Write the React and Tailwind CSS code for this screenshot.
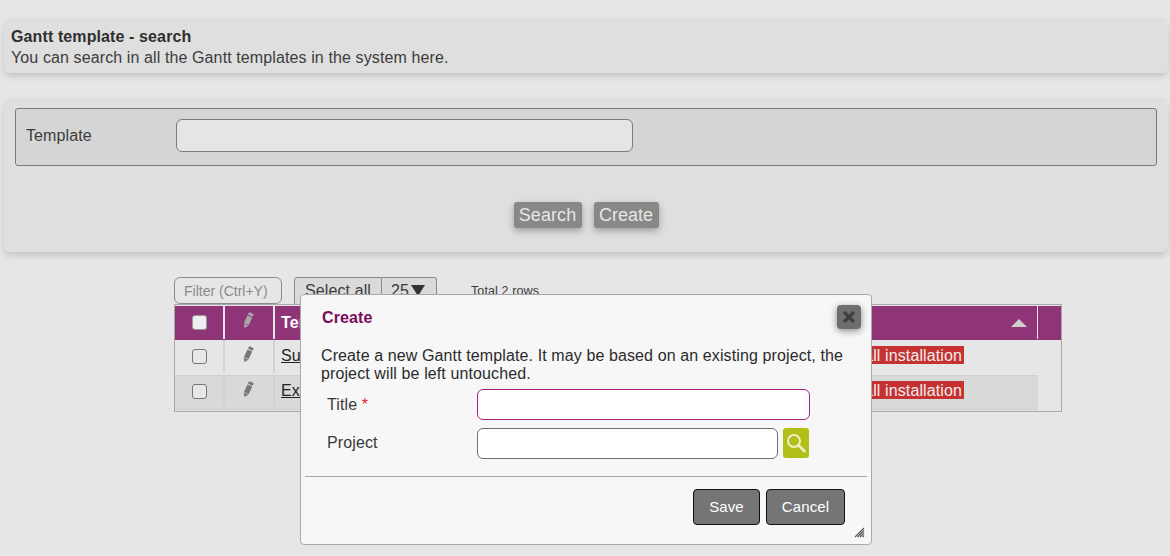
import React from 'react';

const Pencil = ({ className }) => (
  <svg className={className} width="12" height="17" viewBox="0 0 12 17">
    <g transform="rotate(25 6 8.5)" fill="currentColor">
      <rect x="3.4" y="0.3" width="5.2" height="3" rx="1" />
      <rect x="3.4" y="4.1" width="5.2" height="8.4" />
      <path d="M3.4 13 L8.6 13 L6 16.8 Z" />
    </g>
  </svg>
);

const Row = ({ name, alt }) => (
  <div className={`flex h-[35px] w-[863px] pb-[2px] ${alt ? 'bg-[#d9d9d9] border-t border-b border-t-[#d0d0d0] border-b-[#cfcfcf]' : ''}`}>
    <div className="w-[50px] flex items-center justify-center border-r-2 border-[#d2d2d2]">
      <div className="w-[15px] h-[15px] rounded-[3px] border border-[#777] bg-[#e8e8e8]" />
    </div>
    <div className="w-[50px] flex items-center justify-center border-r-2 border-[#d2d2d2] text-[#777] pb-1 pr-[2px]">
      <Pencil />
    </div>
    <div className="flex-1 flex items-center justify-between pl-[6px]">
      <a className="underline text-[16px] text-[#222] mb-[1px]">{name}</a>
      <span className={`self-start mr-[74px] bg-[#c63232] text-[#eee] text-[16px] leading-[17px] pt-[1px] px-[2px] tracking-[0.11px] ${alt ? 'mt-[5px]' : 'mt-[6px]'}`}>Small installation</span>
    </div>
  </div>
);

export default function App() {
  return (
    <div className="relative h-[556px] w-[1170px] overflow-hidden bg-[#e6e6e6] text-[#333] tracking-[0.11px] font-['Liberation_Sans',Arial,sans-serif]">
      <div className="pl-[4px] pt-[18px] pr-[2px]">
        <div className="h-[55px] rounded-[6px] bg-[#dfdfdf] shadow-[0_4px_7px_-1px_rgba(0,0,0,0.16)] px-[7px] pt-[8px] text-[16px] leading-[21px]">
          <div className="font-bold text-[#2f2f2f]">Gantt template - search</div>
          <div className="text-[#3c3c3c]">You can search in all the Gantt templates in the system here.</div>
        </div>

        <div className="mt-[25px] h-[154px] rounded-[6px] bg-[#dfdfdf] shadow-[0_4px_7px_-1px_rgba(0,0,0,0.16)] px-[11px] pt-[10px]">
          <div className="h-[58px] flex items-center rounded-[3px] border border-[#7a7a7a] bg-[#d5d5d5] pl-[10px] pb-[3px]">
            <label className="w-[150px] text-[16px] text-[#3c3c3c]">Template</label>
            <div className="w-[457px] h-[33px] rounded-[6px] border border-[#7c7c7c] bg-[#e5e5e5]" />
          </div>
          <div className="mt-[36px] flex justify-center gap-[12px]">
            <button className="h-[26px] w-[68px] rounded-[3px] bg-[#888] text-[18px] text-[#e6e6e6] shadow-[0_3px_7px_rgba(0,0,0,0.3)]">Search</button>
            <button className="h-[26px] w-[65px] rounded-[3px] bg-[#888] text-[18px] tracking-normal text-[#e6e6e6] shadow-[0_3px_7px_rgba(0,0,0,0.3)]">Create</button>
          </div>
        </div>
      </div>

      <div className="ml-[174px] mt-[25px] w-[888px]">
        <div className="flex items-start h-[28px] -mb-px">
          <div className="w-[108px] h-[27px] rounded-[6px] border border-[#8a8a8a] bg-[#e6e6e6] pl-[9px] text-[14px] tracking-normal leading-[27px] text-[#8a8a8a]">Filter (Ctrl+Y)</div>
          <div className="ml-[12px] w-[88px] h-[28px] rounded-tl-[3px] border border-[#8a8a8a] bg-[#dadada] text-center text-[16px] leading-[26px] text-[#3c3c3c]">Select all</div>
          <div className="w-[55px] h-[28px] rounded-tr-[3px] border border-l-0 border-[#8a8a8a] bg-[#dadada] pl-[9px] flex items-start gap-[2px] text-[16px] leading-[26px] text-[#3c3c3c]">
            <span>25</span>
            <span className="mt-[7px] w-0 h-0 border-x-[7px] border-x-transparent border-t-[11px] border-t-[#333]" />
          </div>
          <div className="ml-[34px] text-[12.5px] leading-[28px] text-[#3c3c3c]">Total 2 rows</div>
        </div>
        <div className="relative h-[108px] border border-[#a8a8a8] bg-[#e6e6e6]">
          <div className="flex h-[35px] pb-[1px] bg-[#8f3476] border-t border-[#e6e6e6] text-white">
            <div className="w-[50px] flex items-center justify-center border-r-2 border-[#e6e6e6]">
              <div className="w-[15px] h-[15px] rounded-[3px] border border-[#999] bg-[#eee]" />
            </div>
            <div className="w-[50px] flex items-center justify-center border-r-2 border-[#e6e6e6] text-[#a9a9a9] pb-1 pr-[2px]">
              <Pencil />
            </div>
            <div className="w-[763px] flex items-center justify-between border-r border-[#e6e6e6] pl-[6px] pr-[10px]">
              <span className="font-bold text-[16px]">Template</span>
              <span className="w-0 h-0 border-x-[8px] border-x-transparent border-b-[8px] border-b-[#cfcfcf]" />
            </div>
          </div>
          <Row name="Summer" />
          <Row name="Example" alt />
        </div>
      </div>

      {/* modal dialog */}
      <div className="absolute left-[300px] top-[294px] w-[572px] h-[251px] rounded-[4px] border border-[#a8a8a8] bg-[#f7f7f7] flex flex-col">
        <div className="flex items-start justify-between pl-[21px] pr-[10px] pt-[10px] h-[52px]">
          <span className="mt-[3px] font-bold text-[16px] leading-[20px] text-[#7a0c5c]">Create</span>
          <button className="w-[24px] h-[24px] rounded-[4px] bg-[#6e6e6e] flex items-center justify-center shadow-[0_2px_7px_rgba(0,0,0,0.45)]">
            <svg width="12" height="12" viewBox="0 0 12 12"><path d="M2 2 L10 10 M10 2 L2 10" stroke="#3f3f3f" strokeWidth="3.2" strokeLinecap="round" /></svg>
          </button>
        </div>
        <p className="pl-[20px] w-[560px] text-[16px] leading-[18px] text-[#2b2b2b]">Create a new Gantt template. It may be based on an existing project, the project will be left untouched.</p>
        <div className="mt-[6px] flex items-center pl-[26px] h-[31px]">
          <label className="w-[150px] text-[16px] text-[#3a3a3a]">Title <span className="text-[#e8212e]">*</span></label>
          <div className="w-[333px] h-[31px] rounded-[6px] border border-[#a6237f] bg-white" />
        </div>
        <div className="mt-[8px] flex items-center pl-[26px] h-[31px]">
          <label className="w-[150px] text-[16px] text-[#3a3a3a] mb-[2px]">Project</label>
          <div className="w-[301px] h-[31px] rounded-[6px] border border-[#707070] bg-white" />
          <button className="self-start ml-[5px] w-[26px] h-[30px] rounded-[3px] bg-[#b2bf18] flex items-center justify-center">
            <svg width="22" height="22" viewBox="0 0 22 22" fill="none" stroke="#eef0c8">
              <circle cx="9" cy="9" r="6" strokeWidth="2" />
              <path d="M13.5 13.5 L19.5 19" strokeWidth="2.6" strokeLinecap="round" />
            </svg>
          </button>
        </div>
        <div className="mx-[4px] mt-[17px] border-t border-[#a8a8a8]" />
        <div className="mt-[12px] flex justify-end gap-[6px] pr-[26px]">
          <button className="w-[67px] h-[36px] rounded-[4px] border border-[#111] bg-[#757575] text-[15px] text-white">Save</button>
          <button className="w-[79px] h-[36px] rounded-[4px] border border-[#111] bg-[#757575] text-[15px] text-white">Cancel</button>
        </div>
        <svg className="absolute right-[6px] bottom-[6px]" width="11" height="11" viewBox="0 0 11 11" stroke="#555" strokeWidth="1.1">
          <path d="M1 10 L10 1 M3.5 10 L10 3.5 M6 10 L10 6 M8.5 10 L10 8.5" />
        </svg>
      </div>
    </div>
  );
}
